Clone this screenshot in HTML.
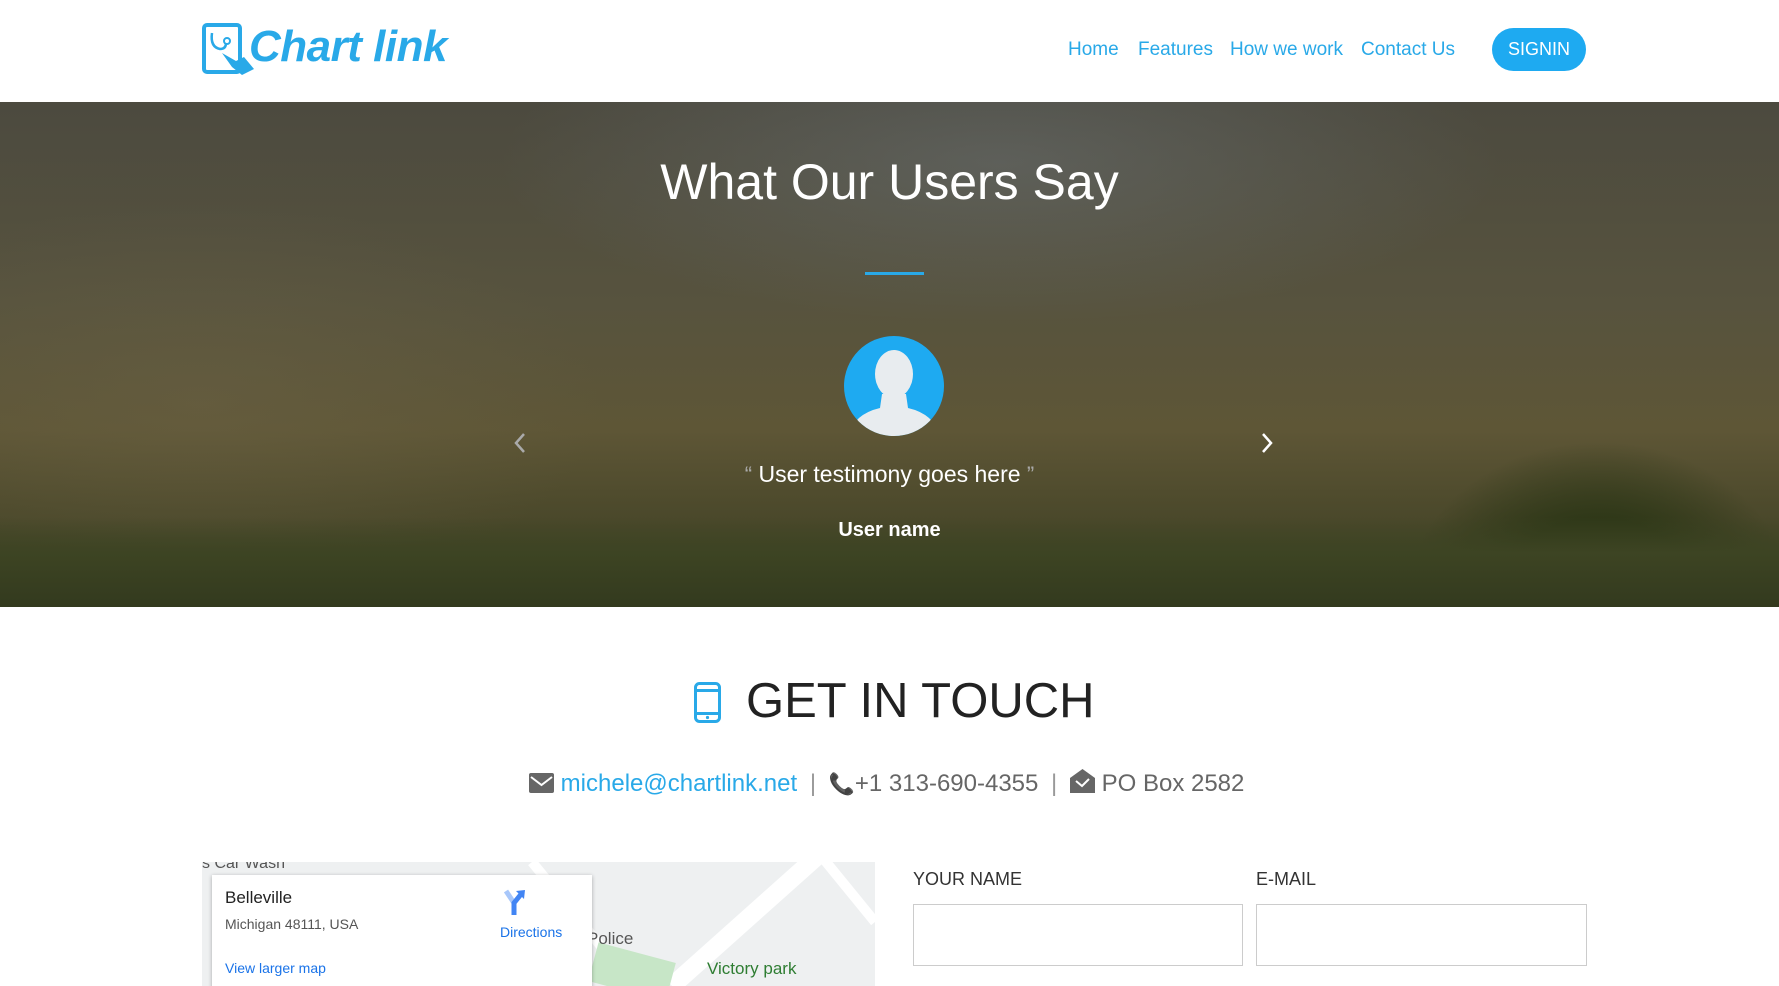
<!DOCTYPE html>
<html><head><meta charset="utf-8">
<style>
*{margin:0;padding:0;box-sizing:border-box}
body{width:1779px;height:986px;overflow:hidden;font-family:"Liberation Sans",sans-serif;background:#fff;position:relative}
.a{position:absolute}
.nav a{position:absolute;top:39px;font-size:19px;color:#29a9e8;text-decoration:none;white-space:nowrap}
.hero{position:absolute;left:0;top:102px;width:1779px;height:505px;overflow:hidden;
background:
radial-gradient(ellipse 500px 160px at 1000px 60px,rgba(120,130,140,.35),transparent),
radial-gradient(ellipse 400px 200px at 200px 300px,rgba(110,100,70,.4),transparent),
linear-gradient(180deg,#4c4a3f 0%,#57533e 40%,#5e5636 65%,#4d4a2c 80%,#3a3e22 100%)}
.trees{position:absolute;left:0;bottom:0;width:100%;height:90px;background:linear-gradient(180deg,rgba(45,55,25,0) 0%,#3d4423 40%,#333a1e 100%)}
.trees2{position:absolute;right:0;bottom:0;width:450px;height:300px;background:radial-gradient(ellipse 260px 220px at 60% 100%,#2f3818 40%,rgba(47,56,24,0) 75%)}
.c{text-align:center;width:100%;left:0}
label{position:absolute;font-size:18px;color:#333;top:869px}
.inp{position:absolute;top:904px;height:62px;border:1px solid #ccc;background:#fff}
</style></head><body>
<svg class="a" style="left:202px;top:23px" width="56" height="54" viewBox="0 0 56 54">
<rect x="2" y="2" width="36" height="47" rx="3" fill="none" stroke="#29a9e8" stroke-width="4"/>
<path d="M10 10 q-2 14 8 16 q6 0 6-6" fill="none" stroke="#29a9e8" stroke-width="2.5"/>
<circle cx="25" cy="18" r="3" fill="none" stroke="#29a9e8" stroke-width="2"/>
<path d="M20 30 l14 8 l8 -4 l10 12 l-12 6 l-10 -8 z" fill="#29a9e8"/>
</svg>
<div class="a" style="left:249px;top:22px;font-size:44px;font-weight:bold;font-style:italic;color:#29a9e8;letter-spacing:-0.5px">Chart link</div>
<div class="nav">
<a style="left:1068px">Home</a>
<a style="left:1138px">Features</a>
<a style="left:1230px">How we work</a>
<a style="left:1361px">Contact Us</a>
</div>
<div class="a" style="left:1492px;top:28px;width:94px;height:43px;border-radius:22px;background:#1eaaf1;color:#fff;font-size:18px;line-height:43px;text-align:center">SIGNIN</div>

<div class="hero">
<div class="trees2"></div><div class="trees"></div>
<div class="a c" style="top:51px;font-size:50px;color:#fff">What Our Users Say</div>
<div class="a" style="left:865px;top:170px;width:59px;height:3px;background:#29a9e8"></div>
<svg class="a" style="left:844px;top:234px" width="100" height="100" viewBox="0 0 100 100">
<defs><clipPath id="cc"><circle cx="50" cy="50" r="50"/></clipPath></defs>
<circle cx="50" cy="50" r="50" fill="#1eaaf1"/>
<g clip-path="url(#cc)" fill="#e8ecef">
<ellipse cx="50" cy="38" rx="19" ry="24"/>
<path d="M38 58 L62 58 L64 72 Q90 78 96 100 L4 100 Q10 78 36 72 Z"/>
</g></svg>
<svg class="a" style="left:513px;top:330px" width="14" height="22"><path d="M11 2 L3 11 L11 20" fill="none" stroke="#aaa" stroke-width="2.5"/></svg>
<svg class="a" style="left:1260px;top:330px" width="14" height="22"><path d="M3 2 L11 11 L3 20" fill="none" stroke="#fff" stroke-width="2.5"/></svg>
<div class="a c" style="top:359px;font-size:23px;color:#fff"><span style="color:#aaa;font-size:22px">“</span> User testimony goes here <span style="color:#aaa;font-size:22px">”</span></div>
<div class="a c" style="top:417px;font-size:20px;font-weight:bold;color:#fff">User name</div>
</div>

<svg class="a" style="left:694px;top:682px" width="27" height="41" viewBox="0 0 27 41">
<rect x="1.5" y="1.5" width="24" height="38" rx="4" fill="none" stroke="#29a9e8" stroke-width="3"/>
<rect x="1" y="7" width="25" height="3" fill="#29a9e8"/><rect x="1" y="30" width="25" height="3" fill="#29a9e8"/>
<circle cx="13.5" cy="35.5" r="1.6" fill="#29a9e8"/></svg>
<div class="a" style="left:746px;top:673px;font-size:49px;color:#222">GET IN TOUCH</div>

<div class="a" style="left:529px;top:769px;font-size:24px;color:#666;white-space:nowrap">
<svg width="25" height="20" viewBox="0 0 25 20" style="vertical-align:-2px"><rect width="25" height="20" rx="2" fill="#666"/><path d="M2 4 L12.5 12 L23 4" fill="none" stroke="#fff" stroke-width="2"/></svg>
<span style="color:#29a9e8">michele@chartlink.net</span> <span style="color:#999;margin:0 6px">|</span>
<span style="font-size:21px">📞</span>+1 313-690-4355 <span style="color:#999;margin:0 6px">|</span>
<svg width="25" height="24" viewBox="0 0 25 24" style="vertical-align:-2px"><path d="M0 9 L12.5 0 L25 9 L25 24 L0 24Z" fill="#666"/><path d="M6 12 L12 17 L19 10" fill="none" stroke="#fff" stroke-width="2"/></svg>
PO Box 2582</div>

<div class="a" style="left:202px;top:862px;width:673px;height:124px;background:#eef0f1;overflow:hidden">
<svg width="673" height="124" style="position:absolute;left:0;top:0">
<path d="M470 124 L620 -10" stroke="#fff" stroke-width="18"/>
<path d="M620 -5 L673 60" stroke="#fff" stroke-width="10"/>
<path d="M330 0 L420 110" stroke="#fff" stroke-width="10"/>
<rect x="390" y="90" width="80" height="40" fill="#c7e6c7" transform="rotate(15 430 110)"/>
<text x="505" y="112" font-size="17" fill="#2e7d32" font-family="Liberation Sans">Victory park</text>
<text x="385" y="82" font-size="17" fill="#555" font-family="Liberation Sans">Police</text>
<text x="0" y="6" font-size="16" fill="#555" font-family="Liberation Sans">s Car Wash</text>
</svg>
<div class="a" style="left:10px;top:13px;width:380px;height:120px;background:#fff;box-shadow:0 1px 4px rgba(0,0,0,.3)">
<div class="a" style="left:13px;top:13px;font-size:17px;color:#222">Belleville</div>
<div class="a" style="left:13px;top:41px;font-size:14px;color:#555">Michigan 48111, USA</div>
<div class="a" style="left:13px;top:85px;font-size:14px;color:#1a73e8">View larger map</div>
<svg class="a" style="left:290px;top:14px" width="24" height="26" viewBox="0 0 24 26"><path d="M4 2 L12 14 L12 26" fill="none" stroke="#a8c7fa" stroke-width="5"/><path d="M12 26 L12 14 L20 4" fill="none" stroke="#4285f4" stroke-width="5"/><path d="M14 2 L23 1 L22 10Z" fill="#4285f4"/></svg>
<div class="a" style="left:288px;top:49px;font-size:14px;color:#1a73e8">Directions</div>
</div></div>

<label style="left:913px">YOUR NAME</label>
<label style="left:1256px">E-MAIL</label>
<div class="inp" style="left:913px;width:330px"></div>
<div class="inp" style="left:1256px;width:331px"></div>
</body></html>
